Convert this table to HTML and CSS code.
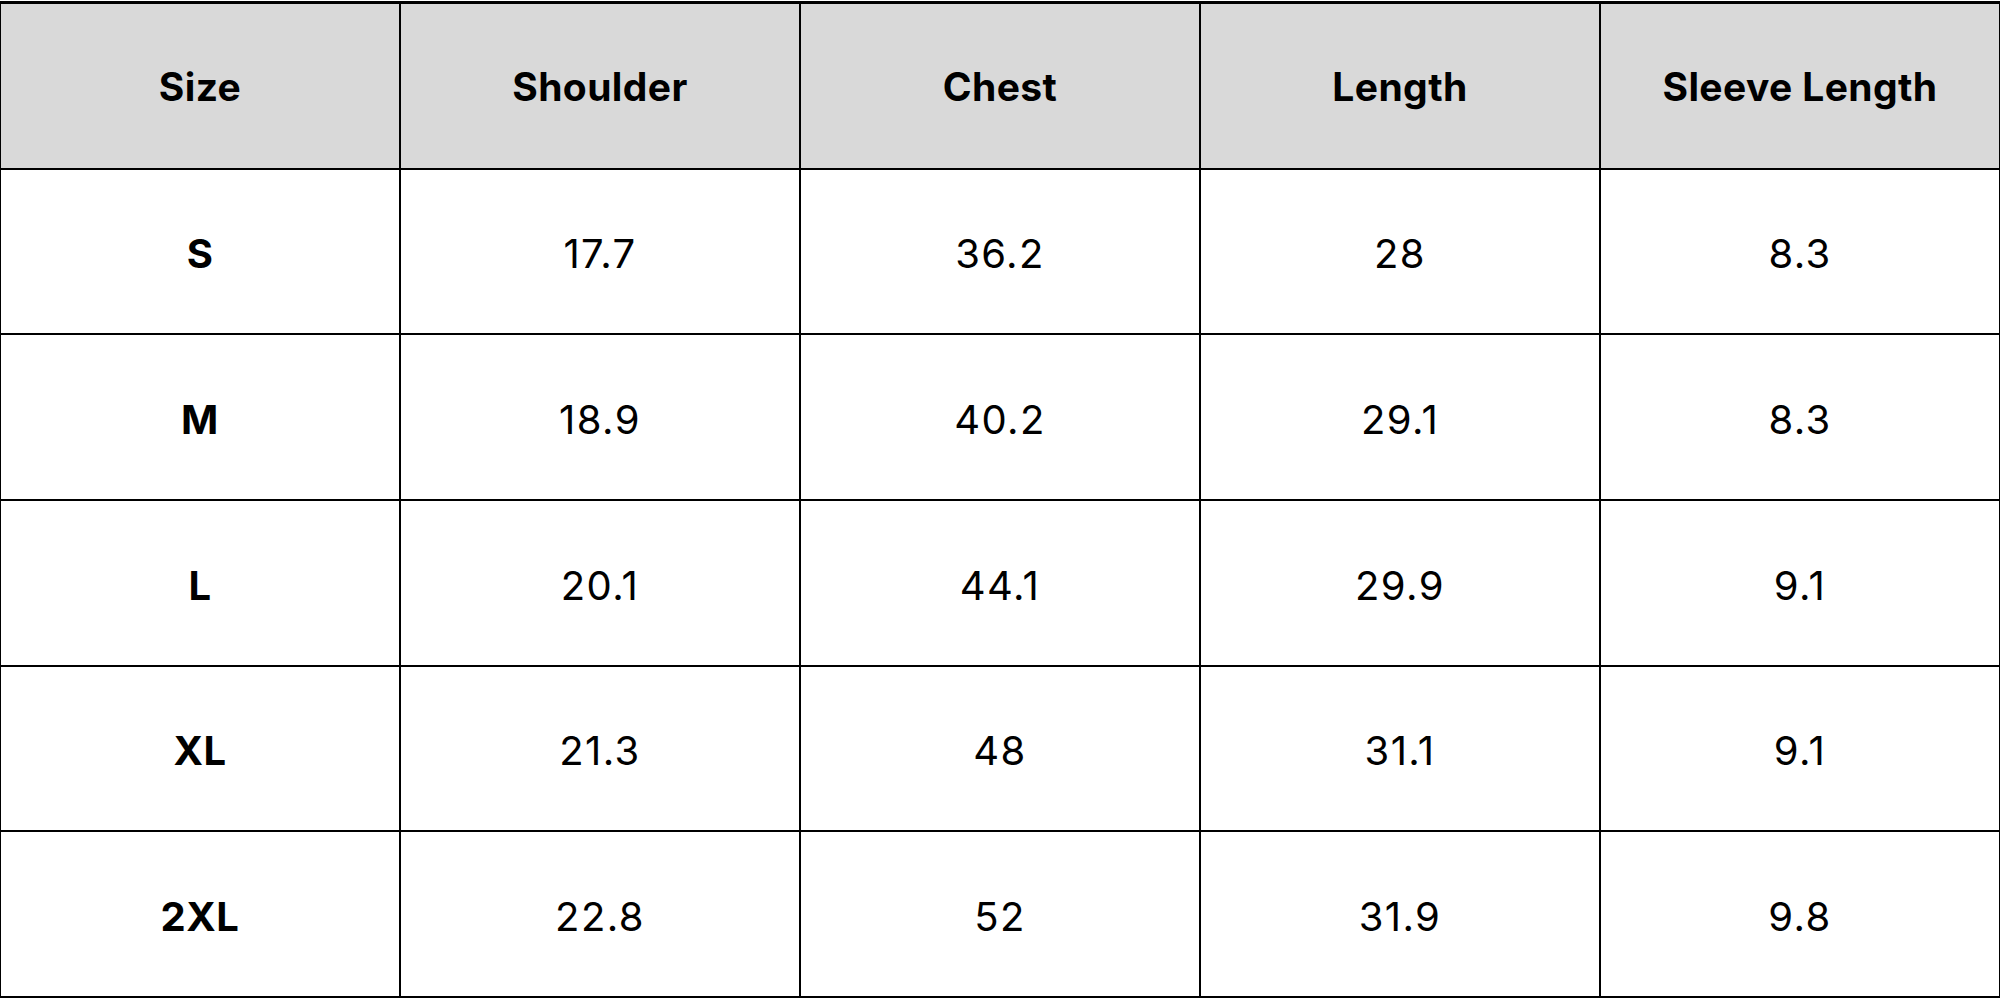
FILE: index.html
```html
<!DOCTYPE html>
<html lang="en">
<head>
<meta charset="utf-8">
<title>Size Chart</title>
<link rel="stylesheet" href="styles.css">
</head>
<body>
<div class="chart">
  <div class="cell head">Size</div>
  <div class="cell head">Shoulder</div>
  <div class="cell head">Chest</div>
  <div class="cell head">Length</div>
  <div class="cell head">Sleeve Length</div>

  <div class="cell size">S</div>
  <div class="cell">17.7</div>
  <div class="cell">36.2</div>
  <div class="cell">28</div>
  <div class="cell">8.3</div>

  <div class="cell size">M</div>
  <div class="cell">18.9</div>
  <div class="cell">40.2</div>
  <div class="cell">29.1</div>
  <div class="cell">8.3</div>

  <div class="cell size">L</div>
  <div class="cell">20.1</div>
  <div class="cell">44.1</div>
  <div class="cell">29.9</div>
  <div class="cell">9.1</div>

  <div class="cell size">XL</div>
  <div class="cell">21.3</div>
  <div class="cell">48</div>
  <div class="cell">31.1</div>
  <div class="cell">9.1</div>

  <div class="cell size">2XL</div>
  <div class="cell">22.8</div>
  <div class="cell">52</div>
  <div class="cell">31.9</div>
  <div class="cell">9.8</div>
</div>
</body>
</html>
```

FILE: styles.css
```css
html, body {
  margin: 0;
  padding: 0;
  background: #ffffff;
}

body {
  width: 2000px;
  height: 1000px;
  overflow: hidden;
  font-family: "Inter", "Open Sans", sans-serif;
  color: #000000;
}

.chart {
  box-sizing: border-box;
  width: 2000px;
  height: 997px;
  margin-top: 1px;
  padding: 3px 1px 2px 1px;
  display: grid;
  grid-template-columns: repeat(5, 1fr);
  grid-template-rows: repeat(6, 1fr);
  gap: 2px;
  background: #000000;
}

.cell {
  display: flex;
  align-items: center;
  justify-content: center;
  padding-top: 5px;
  background: #ffffff;
  font-size: 40px;
  font-weight: 400;
  letter-spacing: 1.4px;
}

.head {
  background: #d9d9d9;
  font-weight: 700;
  font-size: 39px;
  letter-spacing: 0.4px;
  padding-top: 1px;
}

.size {
  font-weight: 700;
  letter-spacing: 0.5px;
}
```
